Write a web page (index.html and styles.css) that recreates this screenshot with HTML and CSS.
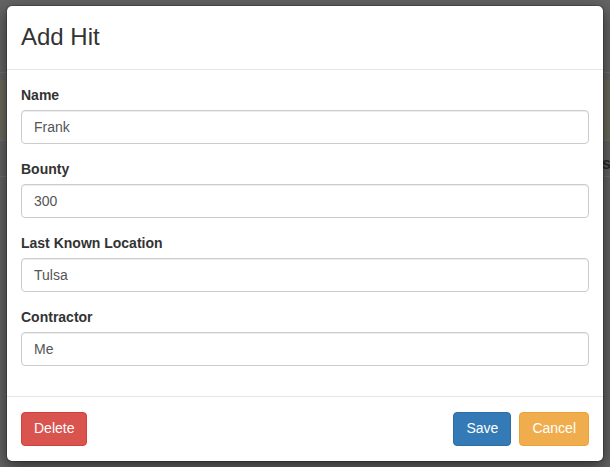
FILE: index.html
```html
<!DOCTYPE html>
<html>
<head>
<meta charset="utf-8">
<link rel="stylesheet" href="styles.css">
</head>
<body>
<div class="page">
  <div class="row row-top"></div>
  <div class="row row-warn"></div>
  <div class="row row-head"><span class="peek">s</span></div>
  <div class="row row-plain"></div>
</div>
<div class="modal">
  <div class="modal-header"><h4 class="modal-title">Add Hit</h4></div>
  <div class="modal-body">
    <div class="form-group">
      <label>Name</label>
      <input class="form-control" value="Frank">
    </div>
    <div class="form-group">
      <label>Bounty</label>
      <input class="form-control" value="300">
    </div>
    <div class="form-group">
      <label>Last Known Location</label>
      <input class="form-control" value="Tulsa">
    </div>
    <div class="form-group">
      <label>Contractor</label>
      <input class="form-control" value="Me">
    </div>
  </div>
  <div class="modal-footer">
    <button class="btn btn-danger">Delete</button>
    <div class="right">
      <button class="btn btn-primary">Save</button>
      <button class="btn btn-warning">Cancel</button>
    </div>
  </div>
</div>
</body>
</html>
```
FILE: styles.css
```css
html, body {
  margin: 0;
  padding: 0;
  height: 100%;
}
body {
  background: #646464;
  font-family: "Liberation Sans", Arial, sans-serif;
  font-size: 14px;
  line-height: 1.42857;
  color: #333;
  overflow: hidden;
}
.page {
  padding-top: 72px;
}
.row {
  border-top: 1px solid #707070;
}
.row-top {
  height: 7px;
}
.row-warn {
  height: 60px;
  background: #6b6a5d;
  border-top: none;
}
.row-head {
  height: 35px;
  position: relative;
}
.row-plain {
  height: 200px;
}
.peek {
  position: absolute;
  left: 602px;
  top: 12px;
  font-weight: bold;
  font-size: 16px;
  color: #2a2a2a;
}
.modal {
  position: absolute;
  left: 6px;
  top: 5px;
  width: 596px;
  background: #fff;
  border: 1px solid rgba(0, 0, 0, 0.2);
  border-radius: 6px;
  box-shadow: 0 5px 15px rgba(0, 0, 0, 0.5);
  background-clip: padding-box;
}
.modal-header {
  padding: 0 14px;
  height: 63px;
  border-bottom: 1px solid #e5e5e5;
  display: flex;
  align-items: center;
}
.modal-title {
  margin: 0;
  font-size: 24px;
  font-weight: 400;
  line-height: 1.1;
  color: #333;
}
.modal-body {
  padding: 15px 14px;
}
.form-group {
  margin-bottom: 15px;
}
.form-group label {
  display: block;
  font-weight: bold;
  padding-top: 1px;
  margin-bottom: 4px;
}
.form-control {
  display: block;
  box-sizing: border-box;
  width: 100%;
  height: 34px;
  padding: 6px 12px;
  font-family: inherit;
  font-size: 14px;
  color: #555;
  background: #fff;
  border: 1px solid #ccc;
  border-radius: 4px;
  box-shadow: inset 0 1px 1px rgba(0, 0, 0, 0.075);
  outline: none;
}
.modal-footer {
  padding: 15px 14px;
  border-top: 1px solid #e5e5e5;
  display: flex;
  justify-content: space-between;
}
.right {
  display: flex;
  gap: 8px;
}
.btn {
  box-sizing: border-box;
  height: 34px;
  padding: 6px 12px;
  font-family: inherit;
  font-size: 14px;
  line-height: 1.42857;
  border: 1px solid transparent;
  border-radius: 4px;
  color: #fff;
}
.btn-danger {
  background: #d9534f;
  border-color: #d43f3a;
}
.btn-primary {
  background: #337ab7;
  border-color: #2e6da4;
}
.btn-warning {
  background: #f0ad4e;
  border-color: #eea236;
}
```
